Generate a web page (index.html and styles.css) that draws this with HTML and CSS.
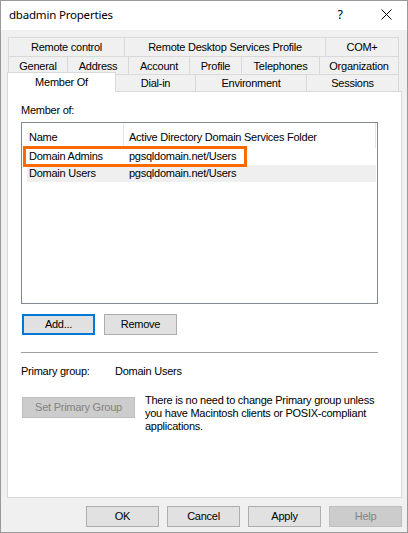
FILE: index.html
```html
<!DOCTYPE html>
<html>
<head>
<meta charset="utf-8">
<link rel="stylesheet" href="styles.css">
</head>
<body>
<div class="window">
  <div class="titlebar">
    <span class="title">dbadmin Properties</span>
    <span class="tb-help">?</span>
    <svg class="tb-close" width="11" height="11" viewBox="0 0 11 11"><path d="M0.5 0.5L10.5 10.5M10.5 0.5L0.5 10.5" stroke="#000" stroke-width="1" fill="none"/></svg>
  </div>
  <div class="content">
    <div class="tabs">
      <div class="tabrow row1">
        <div class="tab t-remote">Remote control</div>
        <div class="tab t-rds">Remote Desktop Services Profile</div>
        <div class="tab t-com last">COM+</div>
      </div>
      <div class="tabrow row2">
        <div class="tab t-general">General</div>
        <div class="tab t-address">Address</div>
        <div class="tab t-account">Account</div>
        <div class="tab t-profile">Profile</div>
        <div class="tab t-tele">Telephones</div>
        <div class="tab t-org last">Organization</div>
      </div>
      <div class="tabrow row3">
        <div class="tab selected t-member">Member Of</div>
        <div class="tab t-dial">Dial-in</div>
        <div class="tab t-env">Environment</div>
        <div class="tab t-sess last">Sessions</div>
      </div>
    </div>
    <div class="panel">
      <div class="label">Member of:</div>
      <div class="list">
        <div class="list-header">
          <div class="h1">Name</div>
          <div class="h2">Active Directory Domain Services Folder</div>
        </div>
        <div class="list-row"><span class="c1">Domain Admins</span><span class="c2">pgsqldomain.net/Users</span></div>
        <div class="list-row alt"><span class="c1">Domain Users</span><span class="c2">pgsqldomain.net/Users</span></div>
        <div class="highlight"></div>
      </div>
      <div class="btnrow">
        <button class="btn default">Add...</button>
        <button class="btn">Remove</button>
      </div>
      <div class="separator"></div>
      <div class="primary">
        <span class="pg-label">Primary group:</span>
        <span class="pg-value">Domain Users</span>
      </div>
      <div class="setrow">
        <button class="btn disabled wide">Set Primary Group</button>
        <p class="note">There is no need to change Primary group unless<br>you have Macintosh clients or POSIX-compliant<br>applications.</p>
      </div>
    </div>
    <div class="footer">
      <button class="btn">OK</button>
      <button class="btn">Cancel</button>
      <button class="btn">Apply</button>
      <button class="btn disabled">Help</button>
    </div>
  </div>
</div>
</body>
</html>
```

FILE: styles.css
```css
html, body {
  margin: 0;
  padding: 0;
  background: #ffffff;
}

.window {
  box-sizing: border-box;
  width: 408px;
  height: 533px;
  border: 1px solid #9a9a9a;
  background: #f0f0f0;
  display: flex;
  flex-direction: column;
  font-family: "Liberation Sans", Arial, sans-serif;
  font-size: 11px;
  letter-spacing: -0.25px;
  color: #000;
}

.titlebar {
  height: 29px;
  background: #ffffff;
  display: flex;
  align-items: center;
  flex-shrink: 0;
}

.title {
  font-family: "Noto Sans", "Open Sans", sans-serif;
  font-size: 11.5px;
  letter-spacing: -0.2px;
  padding-left: 8px;
  flex: 1;
  margin-top: -2px;
}

.tb-help {
  font-family: "Noto Sans", "Open Sans", sans-serif;
  font-size: 12.5px;
  letter-spacing: 0;
  margin-right: 38px;
  margin-top: -2px;
}

.tb-close {
  display: block;
  margin-right: 15px;
  margin-top: -2px;
}

.content {
  flex: 1;
  display: flex;
  flex-direction: column;
  padding: 7px 5px 0 6px;
}

.tabs {
  display: flex;
  flex-direction: column;
}

.tabrow {
  display: flex;
  margin-left: 1px;
}

.row1 { height: 19px; }
.row2 { height: 18px; }
.row3 { height: 17px; margin-left: 0; }

.tab {
  box-sizing: border-box;
  border-top: 1px solid #d9d9d9;
  border-left: 1px solid #d9d9d9;
  background: #f0f0f0;
  display: flex;
  align-items: center;
  justify-content: center;
  white-space: nowrap;
  height: 100%;
}

.tab.last { border-right: 1px solid #d9d9d9; }

.t-remote { width: 116px; }
.t-rds { width: 201px; }
.t-com { width: 74px; }

.t-general { width: 59px; }
.t-address { width: 61px; }
.t-account { width: 61px; }
.t-profile { width: 52px; }
.t-tele { width: 78px; }
.t-org { width: 80px; }

.t-member { width: 109px; }
.t-dial { width: 79px; border-left: none; }
.t-env { width: 111px; }
.t-sess { width: 93px; }

.tab.selected {
  background: #ffffff;
  border-right: 1px solid #d9d9d9;
  height: 20px;
  margin-top: -2px;
  position: relative;
  z-index: 1;
  align-self: flex-start;
  padding-bottom: 1px;
}

.panel {
  box-sizing: border-box;
  width: 395px;
  height: 407px;
  background: #ffffff;
  border: 1px solid #d9d9d9;
  padding: 12px 23px 0 13px;
  display: flex;
  flex-direction: column;
  flex-shrink: 0;
}

.label {
  line-height: 13px;
  height: 13px;
}

.list {
  box-sizing: border-box;
  position: relative;
  margin-top: 5px;
  width: 357px;
  height: 182px;
  border: 1px solid #828790;
  background: #ffffff;
}

.list-header {
  box-sizing: border-box;
  display: flex;
  height: 25px;
  padding-top: 4px;
  line-height: 20px;
  margin-right: 1px;
}

.h1 {
  box-sizing: border-box;
  width: 102px;
  padding-left: 7px;
  border-right: 1px solid #e5e5e5;
  margin-top: -4px;
  padding-top: 4px;
  height: 25px;
}

.h2 {
  flex: 1;
  padding-left: 5px;
  border-right: 1px solid #e5e5e5;
  margin-top: -4px;
  padding-top: 4px;
  height: 21px;
}

.list-row {
  display: flex;
  height: 17px;
  line-height: 17px;
  margin: 0 1px 0 5px;
  white-space: nowrap;
}

.list-row.alt { background: #efefef; }

.c1 {
  box-sizing: border-box;
  width: 102px;
  padding-left: 2px;
}

.highlight {
  position: absolute;
  box-sizing: border-box;
  left: 1px;
  top: 23px;
  width: 224px;
  height: 21px;
  border: 3px solid #ff6a00;
}

.btnrow {
  display: flex;
  gap: 9px;
  margin-top: 10px;
  padding-left: 1px;
}

.btn {
  box-sizing: border-box;
  width: 73px;
  height: 21px;
  padding: 0;
  margin: 0;
  background: #e1e1e1;
  border: 1px solid #adadad;
  border-radius: 0;
  font-family: inherit;
  font-size: inherit;
  letter-spacing: inherit;
  color: #000;
  line-height: 19px;
}

.btn.default {
  border: 2px solid #0078d7;
  line-height: 17px;
}

.btn.disabled {
  background: #cccccc;
  border-color: #bfbfbf;
  color: #838383;
}

.btn.wide { width: 113px; }

.separator {
  margin-top: 17px;
  width: 357px;
  height: 1px;
  background: #a0a0a0;
}

.primary {
  display: flex;
  margin-top: 12px;
  line-height: 13px;
}

.pg-label { width: 94px; }

.setrow {
  display: flex;
  align-items: flex-start;
  margin-top: 19px;
}

.setrow .btn { margin-left: 1px; }

.note {
  margin: -3px 0 0 10px;
  line-height: 13px;
  white-space: nowrap;
}

.footer {
  display: flex;
  justify-content: flex-end;
  gap: 8px;
  margin-top: 8px;
}
```
